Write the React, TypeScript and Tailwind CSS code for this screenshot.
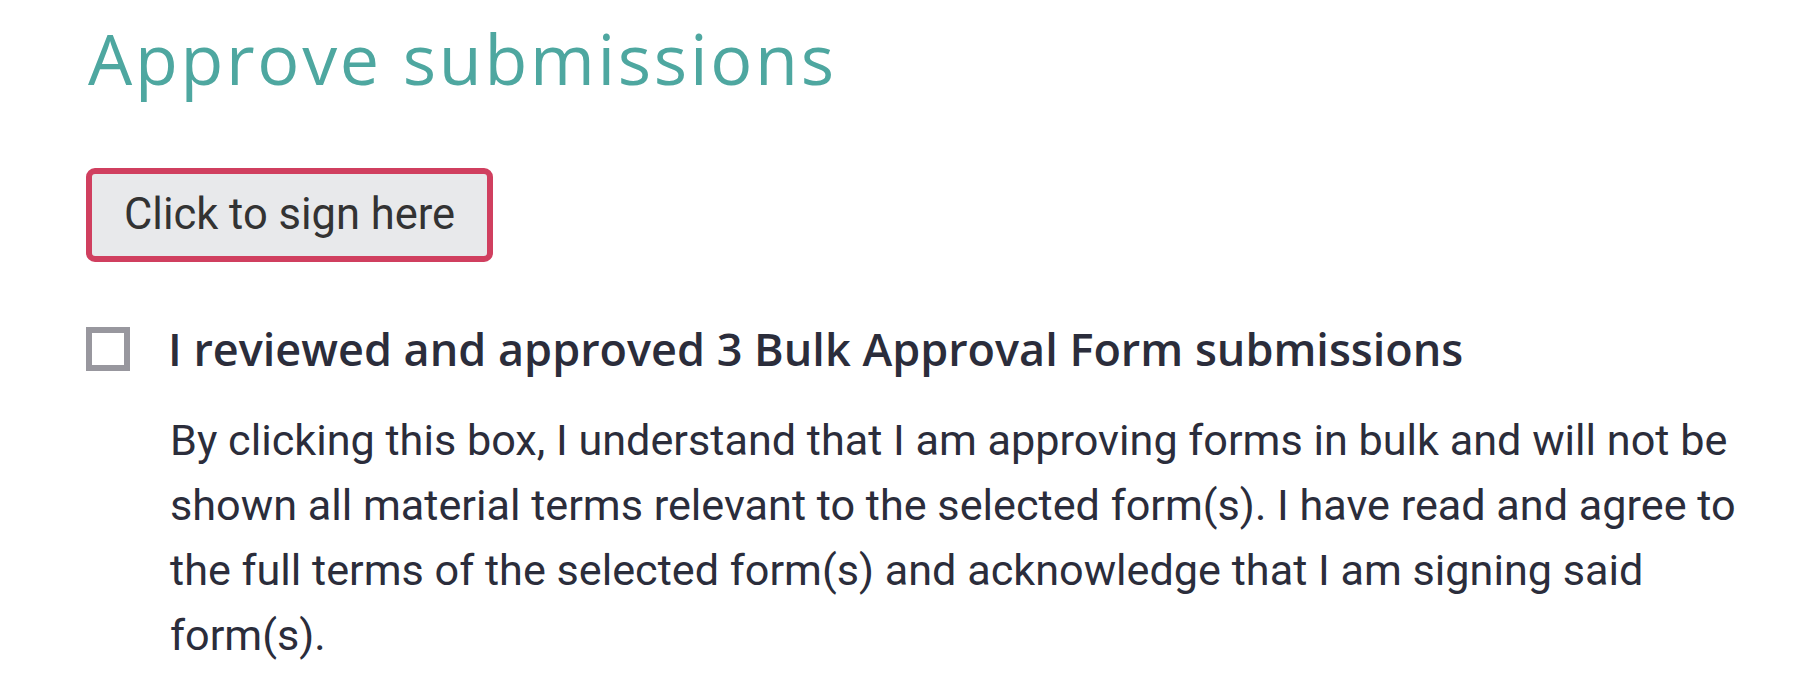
export default function App() {
  return (
    <div className="w-[1804px] h-[694px] bg-white pl-[86px] pt-[17px] overflow-hidden">
      <h1 className="text-[70px] leading-[82px] tracking-[2.7px] font-normal text-[#4ea7a0] font-['Open_Sans',sans-serif] pl-[2px]">
        Approve submissions
      </h1>

      <button
        type="button"
        className="mt-[69px] h-[94px] px-[32px] rounded-[9px] border-[6px] border-[#d03f5f] bg-[#e8e9eb] text-[43.5px] leading-none text-[#333333] font-['Roboto',sans-serif]"
      >
        Click to sign here
      </button>

      <label className="mt-[59px] flex items-center gap-[38px]">
        <span className="w-[44px] h-[44px] border-[6px] border-[#98979e] bg-white shrink-0" />
        <span className="text-[45px] leading-[56px] font-semibold text-[#2b2d3b] font-['Open_Sans',sans-serif]">
          I reviewed and approved 3 Bulk Approval Form submissions
        </span>
      </label>

      <p className="mt-[31px] pl-[84px] pr-[50px] text-[43.2px] leading-[65px] text-[#2b2d3b] font-['Roboto',sans-serif]">
        By clicking this box, I understand that I am approving forms in bulk and will not be shown all material
        terms relevant to the selected form(s). I have read and agree to the full terms of the selected form(s) and
        acknowledge that I am signing said form(s).
      </p>
    </div>
  );
}
